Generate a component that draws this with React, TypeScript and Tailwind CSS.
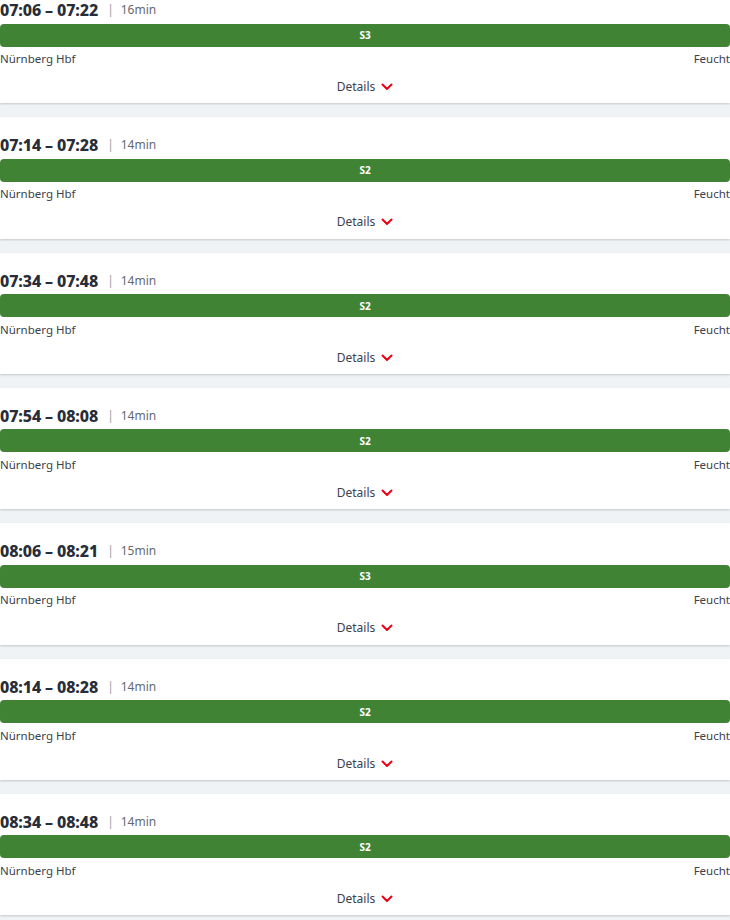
import React from "react";

const trips = [
  { time: "07:06 – 07:22", dur: "16min", line: "S3" },
  { time: "07:14 – 07:28", dur: "14min", line: "S2" },
  { time: "07:34 – 07:48", dur: "14min", line: "S2" },
  { time: "07:54 – 08:08", dur: "14min", line: "S2" },
  { time: "08:06 – 08:21", dur: "15min", line: "S3" },
  { time: "08:14 – 08:28", dur: "14min", line: "S2" },
  { time: "08:34 – 08:48", dur: "14min", line: "S2" },
];

function Card({ time, dur, line }: { time: string; dur: string; line: string }) {
  return (
    <div className="bg-white h-[121.33px] pt-[16px] shadow-[0_1px_2px_rgba(0,0,0,0.18)] flex flex-col">
      <div className="flex items-center h-[24px]">
        <span className="text-[16px] leading-[24px] font-extrabold text-[#282d37] tracking-[-0.1px]">{time}</span>
        <span className="text-[12px] text-[#9a9ea6] ml-[9px]">|</span>
        <span className="text-[12px] text-[#646973] ml-[7px]">{dur}</span>
      </div>
      <div className="mt-[1.5px] h-[23px] bg-[#408335] rounded-[4px] flex items-center justify-center">
        <span className="text-[10px] font-bold text-white leading-none">{line}</span>
      </div>
      <div className="mt-[4.5px] flex justify-between text-[11.5px] leading-[16px] text-[#3c414b]">
        <span>Nürnberg Hbf</span>
        <span>Feucht</span>
      </div>
      <div className="mt-[12px] flex items-center justify-center text-[12px] leading-[16px] text-[#3c414b]">
        <span>Details</span>
        <svg width="12" height="8" viewBox="0 0 12 8" className="ml-[6px]">
          <path d="M1.5 1.5 L6 6 L10.5 1.5" fill="none" stroke="#ec0016" strokeWidth="2" strokeLinecap="round" strokeLinejoin="round" />
        </svg>
      </div>
    </div>
  );
}

export default function App() {
  return (
    <div className="w-[730px] h-[920px] overflow-hidden bg-[#f0f3f5]" style={{ fontFamily: '"Noto Sans", "Liberation Sans", sans-serif' }}>
      <div className="-mt-[18px] flex flex-col gap-[14px]">
        {trips.map((t, i) => (
          <Card key={i} {...t} />
        ))}
      </div>
    </div>
  );
}
